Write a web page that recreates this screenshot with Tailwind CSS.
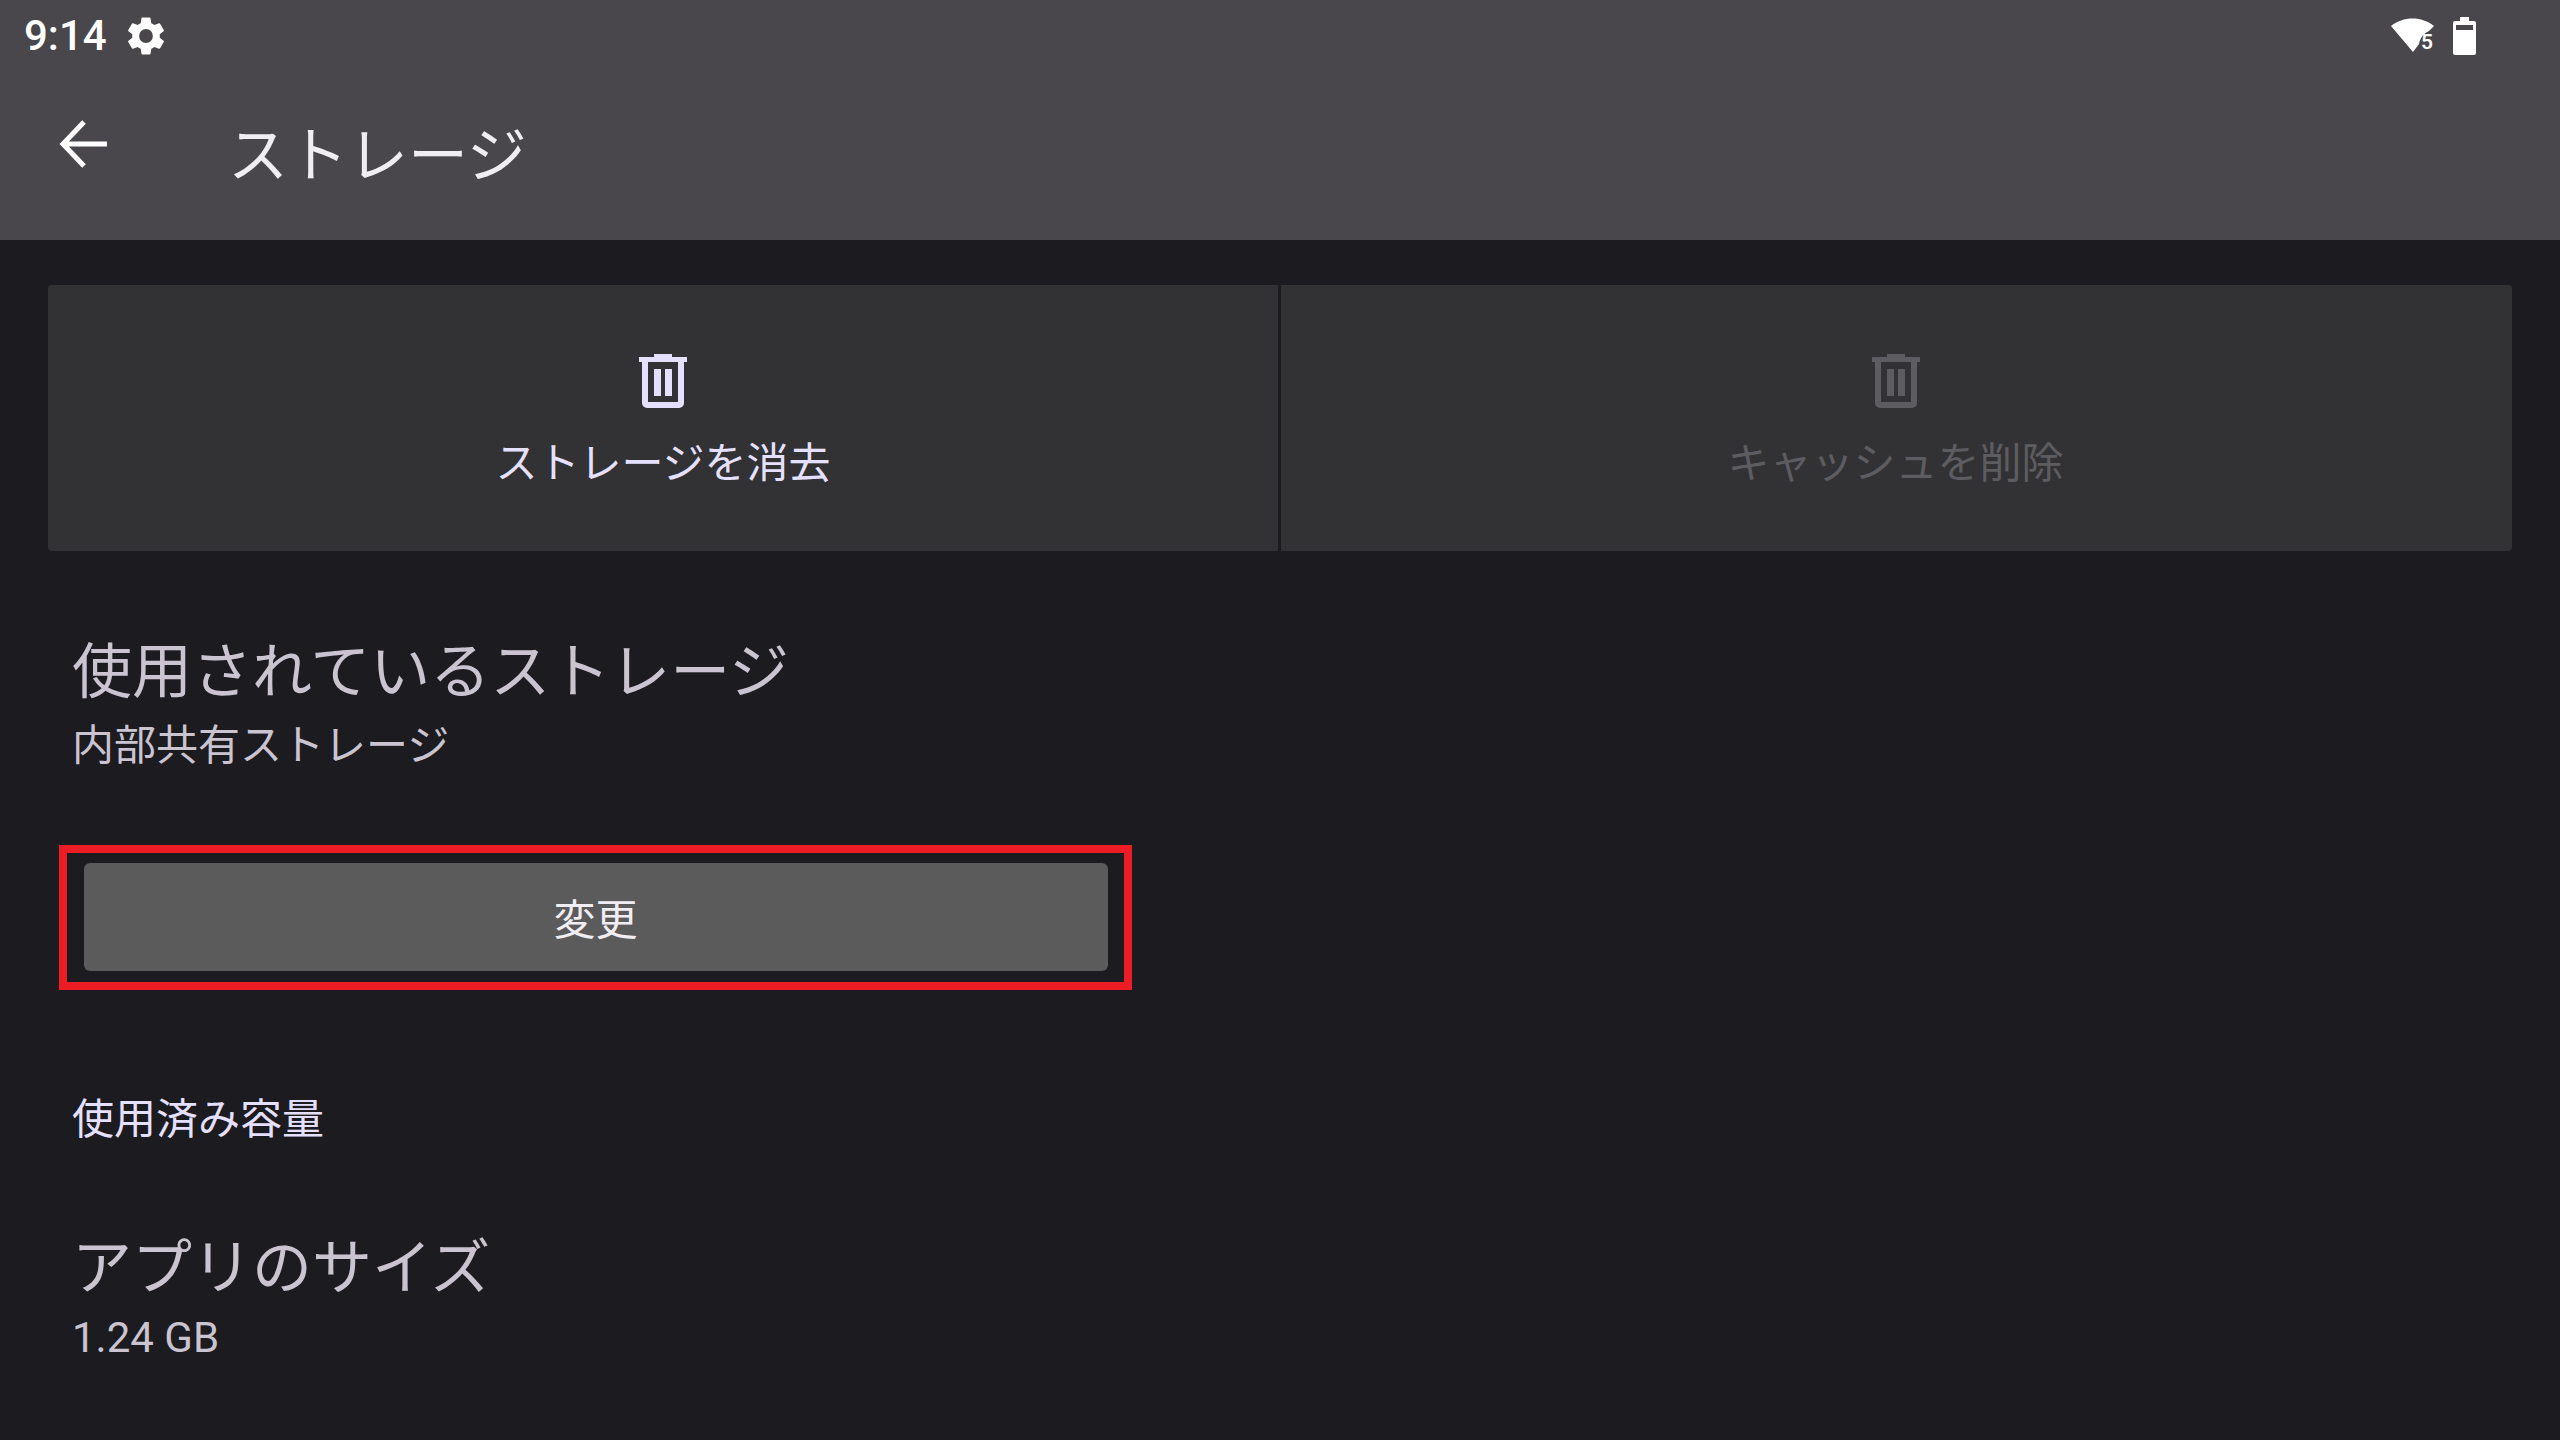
<!DOCTYPE html>
<html lang="ja">
<head>
    <meta charset="UTF-8">
    <title>ストレージ</title>
    <script src="https://cdn.jsdelivr.net/npm/@tailwindcss/browser@4"></script>
</head>
<body class="w-[2560px] h-[1440px] overflow-hidden bg-[#1c1b20] font-['Roboto','Noto_Sans_CJK_JP',sans-serif]">
    <!-- status bar + app bar -->
    <header class="h-[240px] bg-[#49474c] flex flex-col">
        <div class="h-[72px] flex items-center pl-[24px] pr-[84px] text-white">
            <span class="text-[42px] leading-none font-medium">9:14</span>
            <svg class="ml-[16px] w-[46px] h-[46px]" viewBox="0 0 24 24" fill="#fff"><path d="M19.14 12.94c.04-.3.06-.61.06-.94s-.02-.64-.07-.94l2.03-1.58a.49.49 0 0 0 .12-.61l-1.92-3.32a.49.49 0 0 0-.59-.22l-2.39.96c-.5-.38-1.03-.7-1.62-.94l-.36-2.54a.48.48 0 0 0-.48-.41h-3.84a.48.48 0 0 0-.47.41l-.36 2.54c-.59.24-1.13.57-1.62.94l-2.39-.96a.49.49 0 0 0-.59.22L2.74 8.87a.48.48 0 0 0 .12.61l2.03 1.58c-.05.3-.09.63-.09.94s.02.64.07.94l-2.03 1.58a.49.49 0 0 0-.12.61l1.92 3.32c.12.22.37.29.59.22l2.39-.96c.5.38 1.03.7 1.62.94l.36 2.54c.05.24.24.41.48.41h3.84c.24 0 .44-.17.47-.41l.36-2.54c.59-.24 1.13-.56 1.62-.94l2.39.96c.22.08.47 0 .59-.22l1.92-3.32a.48.48 0 0 0-.12-.61l-2.01-1.58zM12 15.6A3.6 3.6 0 1 1 12 8.4a3.6 3.6 0 0 1 0 7.2z"/></svg>
            <div class="ml-auto flex items-center">
                <svg class="w-[50px] h-[38px]" viewBox="0 0 50 38" fill="#fff"><path d="M0 9C12-1 31-1 43 9L38 14C33 16 29 21 28 27L22 35Z"/><text x="30" y="32" font-size="21" font-weight="600" font-family="Roboto">5</text></svg>
                <svg class="ml-[12px] w-[23px] h-[38px]" viewBox="0 0 23 38" fill="#fff"><path fill-rule="evenodd" d="M7 0h9v4h5a2 2 0 0 1 2 2v30a2 2 0 0 1-2 2H2a2 2 0 0 1-2-2V6a2 2 0 0 1 2-2h5zM3 8v5h17V8z"/></svg>
            </div>
        </div>
        <div class="flex-1 flex items-center pl-[57px]">
            <svg class="w-[52px] h-[48px] -mt-[24px]" viewBox="0 0 52 48" fill="none" stroke="#fff" stroke-width="5"><path d="M50 24H6M27 2 6 24l21 22"/></svg>
            <h1 class="ml-[119px] mt-[2px] text-[60px] leading-none text-[#f1eef3]">ストレージ</h1>
        </div>
    </header>

    <main class="pt-[45px]">
        <!-- action cards -->
        <div class="mx-[48px] h-[266px] flex gap-[3px] rounded-[4px] overflow-hidden">
            <div class="w-[1230px] bg-[#323234] flex flex-col items-center pt-[69px] text-[#e6e0ff]">
                <svg class="w-[48px] h-[54px]" viewBox="0 0 48 54" fill="#e6e0ff"><path fill-rule="evenodd" d="M15 0h18v3h15v5h-3v41a5 5 0 0 1-5 5H8a5 5 0 0 1-5-5V8H0V3h15zM9 8v40h30V8zM15 15h7v27h-7zM26 15h7v27h-7z"/></svg>
                <span class="mt-[26px] text-[42px] leading-[60px]">ストレージを消去</span>
            </div>
            <div class="flex-1 bg-[#323234] flex flex-col items-center pt-[69px] pr-[2px] text-[#5d5c60]">
                <svg class="w-[48px] h-[54px]" viewBox="0 0 48 54" fill="#5d5c60"><path fill-rule="evenodd" d="M15 0h18v3h15v5h-3v41a5 5 0 0 1-5 5H8a5 5 0 0 1-5-5V8H0V3h15zM9 8v40h30V8zM15 15h7v27h-7zM26 15h7v27h-7z"/></svg>
                <span class="mt-[26px] text-[42px] leading-[60px]">キャッシュを削除</span>
            </div>
        </div>

        <section class="pl-[72px] pt-[80px] text-[#cac4d0]">
            <h2 class="text-[60px] leading-[84px]">使用されているストレージ</h2>
            <p class="text-[42px] leading-[60px] mt-[1px]">内部共有ストレージ</p>
        </section>

        <!-- annotated button -->
        <div class="ml-[59px] mt-[69px] w-[1073px] h-[145px] border-[8px] border-[#ee1c25] flex items-center justify-center">
            <button class="w-[1024px] h-[108px] mt-[-2px] pt-[7px] rounded-[6px] bg-[#5b5b5c] text-[42px] text-[#f1eef3]">変更</button>
        </div>

        <p class="ml-[72px] mt-[100px] text-[42px] leading-[60px] text-[#e6e0ff]">使用済み容量</p>

        <section class="pl-[72px] pt-[77px] text-[#cac4d0]">
            <h2 class="text-[60px] leading-[84px]">アプリのサイズ</h2>
            <p class="text-[42px] leading-[60px] mt-[-3px]">1.24 GB</p>
        </section>
    </main>
</body>
</html>
